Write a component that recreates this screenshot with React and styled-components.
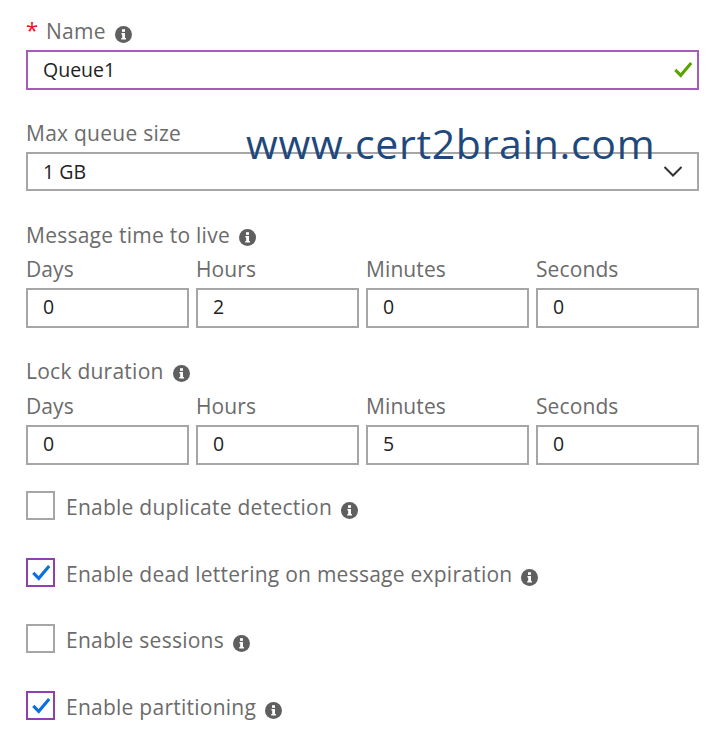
import React from "react";
import styled, { createGlobalStyle } from "styled-components";

const Global = createGlobalStyle`
  html, body { margin: 0; padding: 0; background: #fff; }
  body { font-family: "Open Sans", "Noto Sans", sans-serif; }
`;

const Page = styled.div`
  position: relative;
  width: 720px;
  height: 740px;
  box-sizing: border-box;
  padding: 17px 21px 0 26px;
  overflow: hidden;
  background: #fff;
`;

const Watermark = styled.div`
  position: absolute;
  left: 246px;
  top: 115px;
  font-family: "Open Sans", sans-serif;
  font-size: 41px;
  letter-spacing: 0.7px;
  line-height: 56px;
  color: #1f497d;
  white-space: nowrap;
`;

const Label = styled.div`
  display: flex;
  align-items: center;
  height: 28px;
  font-size: 21px;
  letter-spacing: 0.25px;
  color: #6b6b6b;
  margin-top: ${(p) => p.$top || 0}px;
  white-space: nowrap;
`;

const Star = styled.span`
  color: #e81123;
  font-size: 22px;
  width: 20px;
  position: relative;
  top: -2px;
`;

const Field = styled.div`
  display: flex;
  align-items: center;
  justify-content: space-between;
  box-sizing: border-box;
  height: ${(p) => p.$h || 39}px;
  padding: 0 ${(p) => p.$right || 14}px ${(p) => p.$lift || 0}px 15px;
  border: 2px solid ${(p) => (p.$focus ? "#a45cb8" : "#a6a6a6")};
  font-size: 19.5px;
  color: #222;
  margin-top: ${(p) => p.$top || 0}px;
`;

const Grid = styled.div`
  display: grid;
  grid-template-columns: repeat(4, 163px);
  column-gap: 7px;
  margin-top: ${(p) => p.$top || 0}px;
`;

const SubLabel = styled.div`
  height: 26px;
  line-height: 25px;
  font-size: 21px;
  letter-spacing: 0.1px;
  color: #6b6b6b;
`;

const CheckRow = styled.div`
  display: flex;
  align-items: center;
  height: 29px;
  margin-top: ${(p) => p.$top}px;
  font-size: 21px;
  letter-spacing: 0.25px;
  color: #6b6b6b;
  white-space: nowrap;
`;

const CheckText = styled.span`
  position: relative;
  top: 1.500px;
`;

const Box = styled.div`
  display: flex;
  align-items: center;
  justify-content: center;
  box-sizing: border-box;
  width: 29px;
  height: 29px;
  margin-right: 11px;
  border: 2px solid ${(p) => (p.$checked ? "#8f3fb0" : "#a6a6a6")};
`;

const InfoGap = styled.span`
  display: inline-flex;
  margin-left: 9px;
  position: relative;
  top: ${(p) => p.$y || 2}px;
`;

const Info = () => (
  <svg width="17" height="17" viewBox="0 0 18 18" aria-hidden="true">
    <circle cx="9" cy="9" r="9" fill="#5f5f5f" />
    <rect x="7.400" y="3.400" width="3.200" height="2.800" fill="#fff" />
    <path d="M6.800 7.400h3.800v5.400h1v1.600H6.600v-1.600h1V9H6.800z" fill="#fff" />
  </svg>
);

const Tick = ({ color, size = 20 }) => (
  <svg width={size} height={size} viewBox="0 0 22 22" aria-hidden="true">
    <path d="M2.500 12l6 6L20 4.500" fill="none" stroke={color} strokeWidth="3.400" />
  </svg>
);

const Chevron = () => (
  <svg width="20" height="13" viewBox="0 0 20 13" aria-hidden="true">
    <path d="M1.500 2l8.500 8.500L18.500 2" fill="none" stroke="#333" strokeWidth="2" />
  </svg>
);

const TimeGrid = ({ values, top }) => (
  <>
    <Grid $top={top}>
      {["Days", "Hours", "Minutes", "Seconds"].map((t) => (
        <SubLabel key={t}>{t}</SubLabel>
      ))}
    </Grid>
    <Grid $top={5}>
      {values.map((v, i) => (
        <Field key={i} $h={40} $lift={3}>{v}</Field>
      ))}
    </Grid>
  </>
);

const Check = ({ checked, label, top }) => (
  <CheckRow $top={top}>
    <Box $checked={checked}>{checked && <Tick color="#0a6fe0" />}</Box>
    <CheckText>{label}</CheckText>
    <InfoGap $y={5}><Info /></InfoGap>
  </CheckRow>
);

export default function App() {
  return (
    <Page>
      <Global />
      <Label>
        <Star>*</Star>
        Name
        <InfoGap $y={3}><Info /></InfoGap>
      </Label>
      <Field $focus $right={4} $h={40} $top={5} $lift={2}>
        Queue1
        <Tick color="#5ba300" />
      </Field>
      <Label $top={29}>Max queue size</Label>
      <Field $top={5}>
        1 GB
        <Chevron />
      </Field>
      <Label $top={30}>
        Message time to live
        <InfoGap><Info /></InfoGap>
      </Label>
      <TimeGrid top={8} values={["0", "2", "0", "0"]} />
      <Label $top={29}>
        Lock duration
        <InfoGap><Info /></InfoGap>
      </Label>
      <TimeGrid top={9} values={["0", "0", "5", "0"]} />
      <Check top={26} label="Enable duplicate detection" />
      <Check top={37.5} checked label="Enable dead lettering on message expiration" />
      <Check top={37.5} label="Enable sessions" />
      <Check top={37.5} checked label="Enable partitioning" />
      <Watermark>www.cert2brain.com</Watermark>
    </Page>
  );
}
